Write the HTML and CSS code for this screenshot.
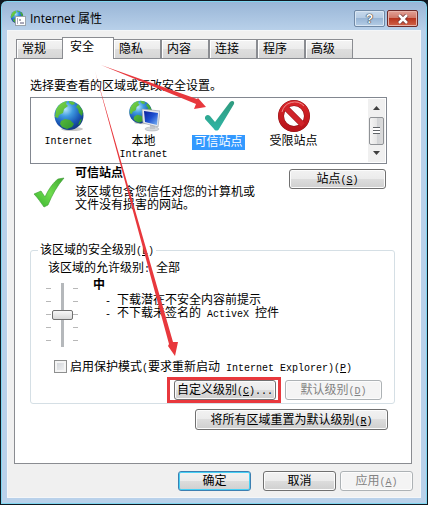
FILE: index.html
```
<!doctype html>
<html lang="zh-CN">
<head>
<meta charset="utf-8">
<title>Internet 属性</title>
<meta name="viewport" content="width=device-width, initial-scale=1">
<link rel="stylesheet" href="styles.css">
</head>
<body>

<!-- shared gradients and the globe -->
<svg class="defs" width="0" height="0" aria-hidden="true">
	<defs>
		<radialGradient id="sea" cx="38%" cy="28%" r="72%">
			<stop offset="0" stop-color="#b8e6fb"/>
			<stop offset=".35" stop-color="#3f9be0"/>
			<stop offset=".75" stop-color="#1a56b4"/>
			<stop offset="1" stop-color="#123a86"/>
		</radialGradient>
		<linearGradient id="land" x1="0" y1="0" x2="1" y2="1">
			<stop offset="0" stop-color="#7fd84a"/>
			<stop offset="1" stop-color="#1f8a2a"/>
		</linearGradient>
		<linearGradient id="screen" x1="0" y1="0" x2="1" y2="1">
			<stop offset="0" stop-color="#0b1f9a"/>
			<stop offset=".5" stop-color="#1c4fd0"/>
			<stop offset="1" stop-color="#7fb8f5"/>
		</linearGradient>
		<linearGradient id="teal" x1="0" y1="0" x2="0" y2="1">
			<stop offset="0" stop-color="#2f9a7e"/>
			<stop offset="1" stop-color="#2fb5a5"/>
		</linearGradient>
		<linearGradient id="green" x1="1" y1="0" x2="0" y2="1">
			<stop offset="0" stop-color="#3fa832"/>
			<stop offset=".5" stop-color="#6fdc4e"/>
			<stop offset="1" stop-color="#35b02c"/>
		</linearGradient>
		<linearGradient id="red" x1="0" y1="0" x2="0" y2="1">
			<stop offset="0" stop-color="#d8262a"/>
			<stop offset="1" stop-color="#b8141a"/>
		</linearGradient>
		<symbol id="globe" viewBox="0 0 32 32">
			<ellipse cx="19" cy="29" rx="11" ry="2" fill="#c8c8c8"/>
			<circle cx="16" cy="15.500" r="14.500" fill="url(#sea)"/>
			<path fill="url(#land)" d="M3 10C5 5 9 2 14 1l-1 3 2 2-4 3-1 4-4 2-1 3-3-1zM16 1l5 1 1 2-3 1-3-2zM25 4c2 2 4 5 5 8l-1 4-3-3-1-4-2-2zM8 21l4-2 5 1 4 4-2 3-5 2-5-2-2-3zM27 20l2-1-2 5-2 1z"/>
		</symbol>
	</defs>
</svg>

<div class="window">
	<div class="titlebar">
		<svg class="app-icon" viewBox="0 0 17 17">
			<use href="#globe" width="14" height="14"/>
			<rect x="5.500" y="6.500" width="10" height="9" fill="#fff" stroke="#9aa3ac"/>
			<path d="M7 9h1M7 11h1M7 13h1M9 10h2M10 13h4" stroke="#557" fill="none"/>
		</svg>
		<h1>Internet 属性</h1>
		<button class="caption" aria-label="帮助">?</button>
		<button class="caption close" aria-label="关闭">
			<svg viewBox="0 0 12 10" width="12" height="10"><path d="M2 1l8 8M10 1L2 9" stroke="#6b3030" stroke-width="4"/><path d="M2 1l8 8M10 1L2 9" stroke="#fff" stroke-width="2.500"/></svg>
		</button>
	</div>

	<div class="client">
		<div class="tabs" role="tablist">
			<button role="tab">常规</button>
			<button role="tab" class="selected" aria-selected="true">安全</button>
			<button role="tab">隐私</button>
			<button role="tab">内容</button>
			<button role="tab">连接</button>
			<button role="tab">程序</button>
			<button role="tab">高级</button>
		</div>

		<div class="panel" role="tabpanel">
			<p class="hint">选择要查看的区域或更改安全设置。</p>

			<div class="zones">
				<ul>
					<li>
						<svg viewBox="0 0 32 32"><use href="#globe" width="32" height="32"/></svg>
						<span class="en">Internet</span>
					</li>
					<li>
						<svg viewBox="0 0 32 32">
							<use href="#globe" x="0" y="0" width="25" height="25"/>
							<ellipse cx="24" cy="29" rx="7" ry="2" fill="#d5d8dc" stroke="#a5a9ae" stroke-width=".5"/>
							<path d="M22 24l5 1v4h-5z" fill="#c0c4c9"/>
							<path d="M14 9l18 2-2 16-15-4z" fill="#e6e9ee" stroke="#9ba3ad" stroke-width=".7"/>
							<path d="M16 11l14 2-1 12-12-3z" fill="url(#screen)"/>
						</svg>
						<span>本地</span>
						<span class="en">Intranet</span>
					</li>
					<li class="picked">
						<svg viewBox="0 0 32 32"><path fill="url(#teal)" d="M2 17c1-2 3-3 5-1l5 6L27 2c2-2 5-1 4 2L16 29c-1 2-4 2-5 0L2 19z"/></svg>
						<span>可信站点</span>
					</li>
					<li>
						<svg viewBox="0 0 32 32">
							<circle cx="16" cy="16" r="13" fill="#fff" stroke="#8d1216" stroke-width="6"/>
							<path d="M7 7l18 18" stroke="#8d1216" stroke-width="6"/>
							<circle cx="16" cy="16" r="13" fill="none" stroke="url(#red)" stroke-width="5"/>
							<path d="M7 7l18 18" stroke="#d0242a" stroke-width="5"/>
							<path d="M4 12a13 13 0 0 1 22-6" stroke="#ee8a8a" fill="none"/>
						</svg>
						<span>受限站点</span>
					</li>
				</ul>
				<div class="scrollbar">
					<svg viewBox="0 0 7 4" width="7" height="4"><path d="M0 4l3.500-4L7 4z"/></svg>
					<i class="thumb"></i>
					<svg viewBox="0 0 7 4" width="7" height="4"><path d="M0 0h7L3.500 4z"/></svg>
				</div>
			</div>

			<div class="zone-info">
				<svg class="check" viewBox="0 0 32 32"><path fill="url(#green)" stroke="#3a9a30" stroke-width=".6" d="M1 18l7-3 4 6C16 12 21 6 25 3l6-1C24 10 19 19 15 29l-4 2C8 27 5 22 1 18z"/></svg>
				<div class="about">
					<h2>可信站点</h2>
					<p>该区域包含您信任对您的计算机或<br>文件没有损害的网站。</p>
				</div>
				<button class="btn sites">站点<span class="en">(<u>S</u>)</span></button>
			</div>

			<fieldset>
				<legend>该区域的安全级别<span class="en">(<u>L</u>)</span></legend>
				<p class="allowed">该区域的允许级别<span class="en">: </span>全部</p>
				<div class="level">
					<div class="slider">
						<input type="range" min="0" max="4" value="2" aria-label="安全级别">
					</div>
					<div>
						<h2>中</h2>
						<ul class="notes">
							<li><span class="en">- </span>下载潜在不安全内容前提示</li>
							<li><span class="en">- </span>不下载未签名的<span class="en"> ActiveX </span>控件</li>
						</ul>
					</div>
				</div>
				<label class="protect">
					<input type="checkbox">
					<span>启用保护模式<span class="en">(</span>要求重新启动<span class="en"> Internet Explorer)(<u>P</u>)</span></span>
				</label>
				<div class="row">
					<div class="marked">
						<button class="btn custom">自定义级别<span class="en">(<u>C</u>)...</span></button>
					</div>
					<button class="btn default" disabled>默认级别<span class="en">(<u>D</u>)</span></button>
				</div>
			</fieldset>

			<button class="btn reset">将所有区域重置为默认级别<span class="en">(<u>R</u>)</span></button>
		</div>

		<div class="actions">
			<button class="btn ok">确定</button>
			<button class="btn">取消</button>
			<button class="btn" disabled>应用<span class="en">(<u>A</u>)</span></button>
		</div>
	</div>
</div>

<!-- annotation arrows -->
<svg class="arrows" width="428" height="505" viewBox="0 0 428 505" aria-hidden="true">
	<path d="M101 65L197 99L198 98L206 107L194 109L196 104z"/>
	<path d="M95 71L173 342L178 342L175 356L168 346L169 344z"/>
</svg>

</body>
</html>
```
FILE: styles.css
```
* { box-sizing: border-box; }

body {
	margin: 0;
	background-color: #101820;
	color: #000;
	font: 12px/12px "Liberation Sans", "Noto Sans CJK SC", sans-serif;
}

h1, h2, p, ul {
	margin: 0;
	padding: 0;
	font-size: 12px;
}

ul { list-style: none; }

button, input {
	margin: 0;
	font: inherit;
	color: inherit;
}

.defs { position: absolute; }

/* half-width latin next to the chinese text */
.en {
	font-family: "Liberation Mono", monospace;
	font-size: 10px;
	line-height: 0;
	white-space: pre;
}

.window {
	display: flex;
	flex-direction: column;
	min-height: 100vh;
	padding: 0 6px 6px;
	border: 1px solid #101820;
	border-radius: 7px 7px 0 0;
	background: linear-gradient(#98b5d6, #b9d1ea 30px, #b9d1ea);
	box-shadow: inset 0 0 0 1px #7fd6f0;
}

.titlebar {
	display: flex;
	align-items: center;
	height: 29px;
	padding: 6px 3px 0;
}

.app-icon {
	width: 17px;
	height: 17px;
}

.titlebar h1 {
	flex: 1;
	padding-left: 3px;
	font-family: "Open Sans", "Noto Sans CJK SC", sans-serif;
	font-weight: normal;
}

.caption {
	display: flex;
	align-items: center;
	justify-content: center;
	width: 31px;
	height: 17px;
	margin-left: 2px;
	padding: 0;
	border: 1px solid #6f88a5;
	border-radius: 2px;
	background: linear-gradient(#c7d9ec, #b3cae3 50%, #98b5d5 50%, #b4cde6);
	box-shadow: inset 0 0 0 1px #d9e6f3;
	color: #fff;
	font-weight: bold;
	text-shadow: 0 0 1px #333, 0 0 1px #333, 0 0 1px #333;
}

.close {
	border-color: #6b2a2a;
	background: linear-gradient(#e2a197, #cf7464 50%, #b8351f 50%, #d0644a);
	box-shadow: inset 0 0 0 1px #e7b3aa;
}

.client {
	flex: 1;
	display: flex;
	flex-direction: column;
	padding: 6px 7px 6px 6px;
	border: 1px solid #f4f6f8;
	background-color: #f0f0f0;
}

.tabs {
	display: flex;
	align-items: flex-end;
	padding-left: 2px;
}

.tabs button {
	width: 48px;
	height: 19px;
	padding: 0 0 0 5px;
	border: 1px solid #8a8c91;
	border-bottom: 0;
	background: linear-gradient(#f4f4f4, #ececec 50%, #dedede 50%, #d6d6d6);
	box-shadow: inset 1px 1px 0 #fff;
	text-align: left;
}

.tabs button:first-child { width: 47px; }

.tabs .selected {
	z-index: 1;
	width: 52px;
	height: 22px;
	margin: 0 -1px -1px;
	padding: 0 0 3px 7px;
	background: #fff;
}

.panel {
	flex: 1;
	display: flex;
	flex-direction: column;
	margin-right: 1px;
	padding: 21px 16px 0 15px;
	border: 1px solid #8a8c91;
	background-color: #fff;
}

.zones {
	display: flex;
	height: 67px;
	margin: 5px 8px 0 0;
	border: 1px solid #828790;
}

.zones ul {
	flex: 1;
	display: flex;
	padding-top: 2px;
}

.zones li {
	display: flex;
	flex-direction: column;
	align-items: center;
	width: 75px;
}

.zones li svg {
	width: 32px;
	height: 32px;
	margin-bottom: 3px;
}

.zones li span {
	flex: none;
	height: 13px;
	line-height: 13px;
}

.zones .picked span {
	height: 15px;
	padding: 0 2px;
	line-height: 15px;
	background-color: #3399ff;
	color: #fff;
}

.scrollbar {
	display: flex;
	flex-direction: column;
	align-items: center;
	justify-content: space-between;
	width: 17px;
	margin: 1px;
	padding: 7px 0;
	background-color: #f0f0f0;
}

.scrollbar path { fill: #404040; }

.thumb {
	width: 15px;
	height: 28px;
	border: 1px solid #8f9296;
	border-radius: 2px;
	background:
		repeating-linear-gradient(#606468 0 1px, #fff 1px 3px) center / 7px 7px no-repeat,
		linear-gradient(to right, #f5f5f5, #e6e6e6 50%, #d0d2d5 50%, #dcdcdc);
}

.zone-info {
	display: flex;
	align-items: flex-start;
	margin-right: 9px;
	padding: 3px 0 0 3px;
}

.check {
	width: 32px;
	height: 32px;
	margin: 9px 10px 0 0;
}

.about { flex: 1; }

.about h2 { margin-bottom: 7px; }

.about p, .notes { line-height: 13px; }

.btn {
	height: 20px;
	padding: 0;
	border: 1px solid #707070;
	border-radius: 3px;
	background: linear-gradient(#f2f2f2, #ebebeb 50%, #dddddd 50%, #cfcfcf);
	box-shadow: inset 0 0 0 1px #fcfcfc;
	white-space: nowrap;
}

.btn:disabled {
	border-color: #adb2b5;
	background: #f4f4f4;
	color: #838383;
}

.sites {
	width: 97px;
	margin-top: 2px;
}

fieldset {
	min-width: 0;
	margin: 32px 0 0;
	padding: 6px 12px 0 17px;
	border: 1px solid #d5dfe5;
	border-radius: 3px;
}

legend {
	margin-left: -10px;
	padding: 0 2px;
}

.level {
	display: flex;
	gap: 15px;
	margin-top: 5px;
}

/* tick marks on both sides of the track */
.slider {
	width: 32px;
	height: 64px;
	margin: 4px 0 0 -2px;
	background:
		repeating-linear-gradient(#b8b8b8 0 1px, #fff 1px 13px) 0 5px / 5px 53px no-repeat,
		repeating-linear-gradient(#b8b8b8 0 1px, #fff 1px 13px) 100% 5px / 5px 53px no-repeat;
}

.slider input {
	display: block;
	appearance: none;
	writing-mode: vertical-lr;
	width: 22px;
	height: 64px;
	margin: 0 auto;
	background: linear-gradient(#b5b8bb, #b5b8bb) center / 3px 100% no-repeat;
}

.slider input::-webkit-slider-thumb {
	appearance: none;
	width: 21px;
	height: 10px;
	border: 1px solid #707070;
	border-radius: 2px;
	background: linear-gradient(#f7f7f7, #d8d8d8);
}

.notes {
	margin-top: 3px;
	padding-left: 12px;
}

.protect {
	display: flex;
	align-items: center;
	gap: 3px;
	margin: 13px 0 0 6px;
	white-space: nowrap;
}

.protect input {
	appearance: none;
	flex: none;
	width: 13px;
	height: 13px;
	border: 1px solid #8e8f8f;
	background: linear-gradient(135deg, #cbcfd5, #f6f6f6);
	box-shadow: inset 0 0 0 2px #f4f4f4;
}

.row {
	display: flex;
	justify-content: flex-end;
	align-items: center;
	gap: 4px;
	margin-top: 4px;
}

.marked {
	display: flex;
	padding: 0 2px 0 4px;
	border: 3px solid #e8383d;
}

.custom { width: 102px; }

.default { width: 97px; }

.reset {
	align-self: flex-end;
	width: 193px;
	height: 21px;
	margin: 5px 7px 20px 0;
}

.actions {
	display: flex;
	justify-content: flex-end;
	gap: 12px;
	padding-top: 7px;
}

.actions .btn { width: 73px; }

.actions .btn:last-child { margin-left: -8px; }

.actions .ok {
	border-color: #3c7fb1;
	box-shadow: inset 0 0 0 1px #46d0f5;
}

.arrows {
	position: absolute;
	top: 0;
	left: 0;
	z-index: 2;
	fill: #e8383d;
	pointer-events: none;
}
```
